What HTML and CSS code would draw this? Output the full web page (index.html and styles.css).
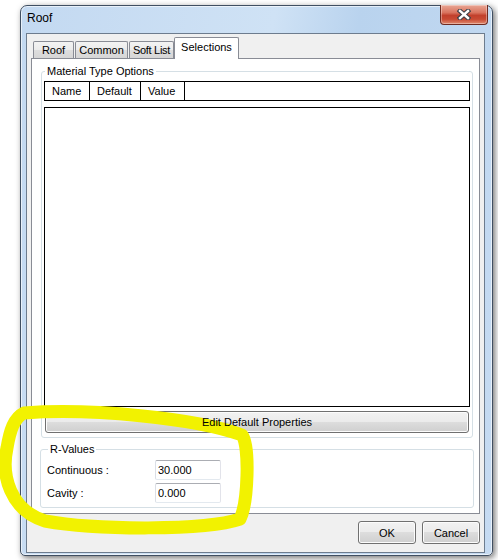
FILE: index.html
```html
<!DOCTYPE html>
<html lang="en">
  <head>
    <meta charset="UTF-8" />
    <meta name="viewport" content="width=device-width, initial-scale=1.0" />
    <title>Roof</title>
    <link rel="stylesheet" href="styles.css">
  </head>
  <body>
    <div class="window">
      <div class="titlebar">
        <span class="title">Roof</span>
        <button class="close" type="button">
          <svg width="14" height="11" viewBox="0 0 14 11">
            <path d="M3 2 L11 9 M11 2 L3 9" stroke="#3d4048" stroke-width="4.6" stroke-linecap="square" />
            <path d="M3 2 L11 9 M11 2 L3 9" stroke="#fff" stroke-width="2.4" stroke-linecap="square" />
          </svg>
        </button>
      </div>

      <div class="client">
        <div class="tabs">
          <div class="tab tab-roof">Roof</div>
          <div class="tab tab-common">Common</div>
          <div class="tab tab-soft">Soft List</div>
          <div class="tab tab-selections active">Selections</div>
        </div>

        <div class="panel">
          <fieldset class="group material">
            <legend>Material Type Options</legend>
            <div class="grid-header">
              <span class="col col-name">Name</span>
              <span class="col col-default">Default</span>
              <span class="col col-value">Value</span>
            </div>
            <div class="grid-body"></div>
            <button class="btn btn-wide" type="button"><span class="over-mark">Edit Default Properties</span></button>
          </fieldset>

          <fieldset class="group rvalues">
            <legend>R-Values</legend>
            <div class="field">
              <label for="continuous">Continuous :</label>
              <input id="continuous" type="text" value="30.000" />
            </div>
            <div class="field">
              <label for="cavity">Cavity :</label>
              <input id="cavity" type="text" value="0.000" />
            </div>
          </fieldset>
        </div>

        <div class="actions">
          <button class="btn" type="button">OK</button>
          <button class="btn" type="button">Cancel</button>
        </div>
      </div>
    </div>

    <!-- highlighter mark drawn over the screenshot -->
    <svg class="highlight" width="498" height="560" viewBox="0 0 498 560">
      <path d="M24 413 C90 408 195 418 242 435 C250 446 248 503 240 519 C205 531 95 530 45 521 C10 510 1 475 7 448 C10 430 14 418 24 413 Z"
            fill="none" stroke="#f2f200" stroke-width="13" stroke-linejoin="round" />
    </svg>
  </body>
</html>
```

FILE: styles.css
```css
html,
body {
  margin: 0;
  padding: 0;
  background: #fff;
}

body {
  position: relative;
  height: 560px;
  overflow: hidden;
  padding: 5px 0 0 20px;
  box-sizing: border-box;
  font: 11px "Liberation Sans", Arial, sans-serif;
  color: #000;
}

.window {
  box-sizing: border-box;
  width: 473px;
  height: 551px;
  display: flex;
  flex-direction: column;
  padding: 0 7px 2px 5px;
  border: 1px solid #404f62;
  border-radius: 7px 7px 5px 5px;
  background: linear-gradient(100deg, #c3d9f1 0%, #cfe2f5 45%, #b9d3ee 60%, #c6dbf2 100%);
  box-shadow: 2px 2px 6px rgba(0, 0, 0, 0.55), inset 0 0 0 1px rgba(255, 255, 255, 0.6);
}

.titlebar {
  flex: none;
  height: 27px;
  display: flex;
  align-items: flex-start;
  justify-content: space-between;
}

.title {
  margin: 5px 0 0 1px;
  font-size: 12px;
  line-height: 14px;
}

.close {
  width: 48px;
  height: 20px;
  margin: -1px -3px 0 0;
  padding: 0;
  display: flex;
  align-items: center;
  justify-content: center;
  border: 1px solid #6e2a20;
  border-top: 0;
  border-radius: 0 0 4px 4px;
  background: linear-gradient(#e9a795 0%, #d9745f 40%, #c2402c 55%, #c84a33 75%, #e08a6e 100%);
  box-shadow: inset 0 0 0 1px rgba(255, 255, 255, 0.35);
}

.client {
  flex: 1;
  display: flex;
  flex-direction: column;
  padding: 3px 4px 8px;
  border: 1px solid #6d7c8e;
  background: #f0f0f0;
}

/* tabs */

.tabs {
  position: relative;
  z-index: 1;
  flex: none;
  height: 22px;
  margin-bottom: -1px;
  padding-left: 2px;
  display: flex;
  align-items: flex-end;
}

.tab {
  box-sizing: border-box;
  height: 17px;
  margin: 0 1px 1px 0;
  border: 1px solid #898c95;
  border-bottom: 0;
  border-radius: 2px 2px 0 0;
  background: linear-gradient(#f3f3f3, #ebebeb 50%, #dedede 50%, #d6d6d6);
  line-height: 16px;
  text-align: center;
}

.tab-roof { width: 41px; }
.tab-common { width: 53px; }
.tab-soft { width: 45px; letter-spacing: -0.3px; }
.tab-selections { width: 65px; }

.tab.active {
  height: 22px;
  margin: 0 0 0 -1px;
  background: #fff;
  line-height: 19px;
}

.panel {
  flex: 1;
  padding: 6px 5px 5px 8px;
  border: 1px solid #898c95;
  background: #fff;
}

/* group boxes */

.group {
  margin: 0;
  border: 1px solid #d5dfe5;
  border-radius: 3px;
}

.group legend {
  margin-left: 1px;
  padding: 0 2px;
  line-height: 13px;
}

.material {
  margin: 0 1px;
  padding: 3px 2px 4px;
}

.grid-header {
  box-sizing: border-box;
  height: 20px;
  display: flex;
  border: 1px solid #000;
}

.col {
  box-sizing: border-box;
  padding-left: 7px;
  border-right: 1px solid #000;
  line-height: 18px;
}

.col-name { width: 45px; }
.col-default { width: 51px; }
.col-value { width: 44px; }

.grid-body {
  box-sizing: border-box;
  height: 300px;
  margin-top: 6px;
  border: 1px solid #000;
  background: #fff;
}

.btn {
  box-sizing: border-box;
  width: 58px;
  height: 23px;
  padding: 0;
  border: 1px solid #707070;
  border-radius: 3px;
  background: linear-gradient(#f2f2f2, #ebebeb 50%, #dddddd 50%, #cfcfcf);
  box-shadow: inset 0 0 0 1px #fcfcfc;
  font: inherit;
  color: #000;
}

.btn-wide {
  display: block;
  width: calc(100% - 2px);
  height: 22px;
  margin: 4px 1px 0;
}

/* the button caption stays readable above the marker */
.over-mark {
  position: relative;
  z-index: 3;
}

.rvalues {
  margin-top: 5px;
  padding: 4px 6px 4px;
}

.field {
  height: 20px;
  display: flex;
  align-items: center;
}

.field + .field {
  margin-top: 3px;
}

.field label {
  width: 108px;
}

.field input {
  box-sizing: border-box;
  width: 66px;
  height: 20px;
  margin: 0;
  padding: 0 0 0 2px;
  border: 1px solid;
  border-color: #abadb3 #e2e3ea #e3e9ef #dbdfe6;
  border-radius: 2px;
  font: inherit;
  color: #000;
}

.actions {
  flex: none;
  margin-top: 7px;
  display: flex;
  justify-content: flex-end;
  gap: 6px;
}

.highlight {
  position: absolute;
  z-index: 2;
  left: 0;
  top: 0;
  pointer-events: none;
}
```
